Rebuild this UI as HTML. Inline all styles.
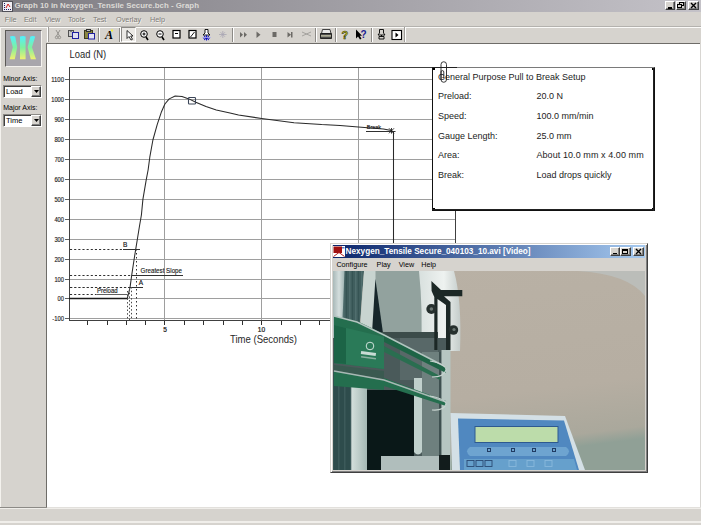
<!DOCTYPE html>
<html><head><meta charset="utf-8">
<style>
*{margin:0;padding:0;box-sizing:border-box}
html,body{width:703px;height:525px;overflow:hidden;background:#fff;font-family:"Liberation Sans",sans-serif;position:relative}
.a{position:absolute}
.t{position:absolute;white-space:nowrap;line-height:1}
#title{left:0;top:0;width:701px;height:12px;background:linear-gradient(to right,#7e7c82,#c4c2c8)}
#menu{left:0;top:12px;width:701px;height:14px;background:#d6d3ce}
.mi{position:absolute;top:16px;font-size:7.3px;color:#7c7a76;text-shadow:0.6px 0.6px 0 #f6f5f2;white-space:nowrap;line-height:1}
#tb{left:46px;top:27px;width:655px;height:16px;background:#d6d3ce;border-top:1px solid #fbfaf8}
#left{left:0;top:27px;width:47px;height:481px;background:#d6d3ce;border-top:1px solid #fbfaf8;border-left:1px solid #f4f2ee}
#chart{left:46px;top:43px;width:654px;height:464px;background:#fff;border-left:1px solid #6e6c68;border-top:1px solid #6e6c68}
#status{left:0;top:507px;width:701px;height:18px;background:#d6d3ce;border-top:1px solid #e2e0dc}
.wb{position:absolute;background:#d6d3ce;border:1px solid;border-color:#fff #404040 #404040 #fff;box-shadow:inset -1px -1px 0 #808080}
.sep{position:absolute;top:28px;width:2px;height:14px;border-left:1px solid #8c8a86;border-right:1px solid #fff}
</style></head><body>
<div id="title" class="a"></div>
<svg class="a" style="left:2px;top:1px" width="11" height="11" viewBox="0 0 11 11"><rect x="0.5" y="0.5" width="10" height="10" fill="#f0eef4" stroke="#505058" stroke-width="1"/><g fill="#1a1a60"><rect x="2" y="2" width="1" height="1"/><rect x="2" y="4" width="1" height="1"/><rect x="2" y="6" width="1" height="1"/><rect x="2" y="8" width="1" height="1"/><rect x="4" y="8" width="1" height="1"/><rect x="6" y="8" width="1" height="1"/><rect x="8" y="8" width="1" height="1"/></g><polyline points="4,7 6,3 8,6" fill="none" stroke="#d02020" stroke-width="1"/></svg>
<div class="t" style="left:14.5px;top:2.2px;font-size:7.9px;font-weight:bold;color:#dcdad6">Graph 10 in Nexygen_Tensile Secure.bch - Graph</div>
<div class="wb" style="left:665px;top:1px;width:10px;height:9px"></div>
<div class="a" style="left:668px;top:7px;width:4px;height:1.5px;background:#000"></div>
<div class="wb" style="left:676px;top:1px;width:10px;height:9px"></div>
<svg class="a" style="left:677px;top:2px" width="8" height="7"><rect x="2.5" y="0.5" width="4" height="3" fill="none" stroke="#000" stroke-width="1"/><rect x="0.5" y="2.5" width="4" height="3" fill="#d6d3ce" stroke="#000" stroke-width="1"/></svg>
<div class="wb" style="left:688px;top:1px;width:11px;height:9px"></div>
<svg class="a" style="left:690px;top:2px" width="7" height="7"><path d="M1 1L6 6M6 1L1 6" stroke="#000" stroke-width="1.4"/></svg>
<div id="menu" class="a"></div>
<div class="mi" style="left:4.8px">File</div>
<div class="mi" style="left:23.9px">Edit</div>
<div class="mi" style="left:44.7px">View</div>
<div class="mi" style="left:67.9px">Tools</div>
<div class="mi" style="left:93px">Test</div>
<div class="mi" style="left:116px">Overlay</div>
<div class="mi" style="left:150px">Help</div>
<div class="a" style="left:0;top:26px;width:701px;height:1px;background:#b4b2ae"></div>
<div id="tb" class="a"></div>
<div id="left" class="a"></div>
<div id="chart" class="a"></div>
<div class="a" style="left:700px;top:43px;width:1px;height:482px;background:#d8d6d2"></div>
<div id="status" class="a"></div>
<div class="a" style="left:0;top:508px;width:701px;height:1px;background:#efede9"></div><div class="a" style="left:0;top:521px;width:701px;height:2px;background:#f0eeea"></div>
<!-- toolbar -->
<div class="a" style="left:47px;top:27px;width:1px;height:15px;background:#fff"></div>
<div class="a" style="left:48px;top:27px;width:1px;height:15px;background:#a09e9a"></div>
<div class="sep" style="left:98px"></div>
<div class="sep" style="left:119px"></div>
<div class="sep" style="left:232px"></div>
<div class="sep" style="left:315px"></div>
<div class="sep" style="left:335px"></div>
<div class="sep" style="left:371px"></div>
<div class="a" style="left:405px;top:27px;width:1px;height:15px;background:#fff"></div>
<div class="a" style="left:404px;top:27px;width:1px;height:15px;background:#a09e9a"></div>
<div class="a" style="left:121px;top:27px;width:15px;height:15px;background:#ebe9e5;border-top:1px solid #8c8a86;border-left:1px solid #8c8a86;border-right:1px solid #fff;border-bottom:1px solid #fff"></div>
<svg class="a" style="left:0;top:0" width="703" height="44" viewBox="0 0 703 44">
 <!-- scissors grey -->
 <g fill="none" stroke="#8e8c88" stroke-width="0.9">
  <path d="M56 30L59.6 36.2M60 30L56.4 36.2"/>
  <circle cx="56.6" cy="37.4" r="1.3"/><circle cx="59.4" cy="37.4" r="1.3"/>
 </g>
 <!-- copy -->
 <rect x="68.5" y="30.5" width="5" height="6" fill="#c8c8c8" stroke="#505050"/>
 <rect x="72.5" y="32.5" width="6" height="6" fill="#e0e0f0" stroke="#2020a0"/>
 <rect x="70" y="31" width="2" height="1" fill="#808080"/>
 <!-- paste -->
 <rect x="84.5" y="30.5" width="8" height="8" fill="#8a8640" stroke="#3c3a20"/>
 <rect x="86.5" y="29.5" width="4" height="2" fill="#c0c0c0" stroke="#303030"/>
 <rect x="88.5" y="33.5" width="6" height="5.5" fill="#e4e4f4" stroke="#2020a0"/>
 <!-- A -->
 <text x="105" y="39" font-family="Liberation Serif" font-style="italic" font-weight="bold" font-size="12" fill="#000">A</text>
 <rect x="111" y="29.5" width="2" height="2" fill="#f0f040"/>
 <!-- arrow -->
 <path d="M127 30.5L127 38.5L129 36.5L131 40L132.5 39.3L130.7 36L133 36Z" fill="#fff" stroke="#000" stroke-width="0.8"/>
 <!-- zoom + -->
 <circle cx="144" cy="34" r="3.3" fill="#fff" stroke="#000" stroke-width="1"/>
 <path d="M142.5 34H145.5M144 32.5V35.5" stroke="#000" stroke-width="1"/>
 <path d="M146 37L148 40" stroke="#000" stroke-width="1.6"/>
 <!-- zoom - -->
 <circle cx="160" cy="34" r="3.3" fill="#fff" stroke="#000" stroke-width="1"/>
 <path d="M158.5 34H161.5" stroke="#000" stroke-width="1"/>
 <path d="M162 37L164 40" stroke="#000" stroke-width="1.6"/>
 <!-- box1 -->
 <rect x="173" y="30.5" width="7" height="7.5" fill="#fff" stroke="#000" stroke-width="1.2"/>
 <rect x="175" y="33" width="3" height="1" fill="#000"/>
 <!-- box2 -->
 <rect x="189" y="30.5" width="7" height="7.5" fill="#fff" stroke="#000" stroke-width="1.2"/>
 <path d="M190.5 37L194.5 32" stroke="#000" stroke-width="0.9"/>
 <!-- pin blue -->
 <path d="M205 29.5H208V33L210 35H203L205 33Z" fill="#fff" stroke="#000" stroke-width="0.9"/>
 <path d="M203 38L210 38M206.5 35V40.5M204 36L209 40M209 36L204 40" stroke="#1010c0" stroke-width="1"/>
 <path d="M202 37.5H211" stroke="#b0b0f0" stroke-width="0.8"/>
 <!-- star grey -->
 <path d="M222.8 31V38M219 34.5H226.6M220.5 32.2L225 36.8M225 32.2L220.5 36.8" stroke="#a8a6b4" stroke-width="0.8"/>
 <!-- ff -->
 <path d="M240 32V37.5L243 34.75ZM244 32V37.5L247 34.75Z" fill="#6c6a66"/>
 <path d="M256.5 31.5V38L260.5 34.75Z" fill="#6c6a66"/>
 <rect x="272.5" y="32" width="4" height="5" fill="#6c6a66"/>
 <path d="M287.5 32V37.5L291 34.75ZM291 32H292.5V37.5H291Z" fill="#6c6a66"/>
 <!-- scissors grey horizontal -->
 <g fill="none" stroke="#a4a29e" stroke-width="1">
  <path d="M302 32L311 36M302 36L311 32"/>
 </g>
 <!-- printer -->
 <path d="M322.5 29.5H330L331 33.5H321.5Z" fill="#e8e8e8" stroke="#303030" stroke-width="0.9"/>
 <path d="M320.5 33.5H331.5V38.5H320.5Z" fill="#4a4a4a" stroke="#1a1a1a" stroke-width="0.9"/>
 <rect x="321" y="35.3" width="10" height="1.2" fill="#d8d8b8"/>
 <!-- ? yellow -->
 <text x="341.5" y="38.5" font-family="Liberation Sans" font-weight="bold" font-size="11" fill="#c8c820" stroke="#202000" stroke-width="0.5">?</text>
 <!-- arrow ? -->
 <path d="M356 29.5L356 38.5L358 36.5L360 39.5L361.5 38.8L359.7 35.8L362 35.8Z" fill="#000"/>
 <text x="360.5" y="37.5" font-family="Liberation Sans" font-weight="bold" font-size="10" fill="#1a1a90">?</text>
 <!-- pin outline -->
 <path d="M379.5 29.5H383.5V33L385 35H378L379.5 33ZM381.5 35V36.5M379 36.5H384V39H379Z" fill="none" stroke="#000" stroke-width="0.9"/>
 <!-- play box -->
 <rect x="392" y="30.5" width="9.5" height="9" fill="#fff" stroke="#000" stroke-width="1.1"/>
 <path d="M395.5 32.5V37.5L398.5 35Z" fill="#000"/>
</svg>

<!-- left panel -->
<div class="a" style="left:0;top:507px;width:47px;height:1px;background:#8c8a86"></div>
<div class="a" style="left:5px;top:30px;width:37px;height:37px;background:#a8a6ac;border-top:1px solid #5a5856;border-left:1px solid #5a5856;border-right:1px solid #f4f2ee;border-bottom:1px solid #f4f2ee"></div>
<svg class="a" style="left:5px;top:30px" width="37" height="37" viewBox="0 0 37 37">
 <defs><linearGradient id="lg" x1="0" y1="0" x2="0" y2="1"><stop offset="0" stop-color="#50f0ff"/><stop offset="0.5" stop-color="#80f0a0"/><stop offset="1" stop-color="#f0f070"/></linearGradient></defs>
 <path d="M5 6.5Q7.6 5.5 10.2 6.5L12.2 17.2L9.8 29.2H4.6L7.8 17.2Z" fill="url(#lg)"/>
 <path d="M15 6.5Q17.8 5.5 20.6 6.5V29.2H15Z" fill="url(#lg)"/>
 <path d="M25.4 6.5Q27.8 5.5 30.2 6.5L27 17.2L31 29.2H25.8L22.6 17.2Z" fill="url(#lg)"/>
</svg>
<div class="t" style="left:3.2px;top:75px;font-size:7px;color:#000">Minor Axis:</div>
<div class="a" style="left:3px;top:85px;width:39px;height:13px;background:#fff;border-top:1px solid #8c8a86;border-left:1px solid #8c8a86;border-right:1px solid #fff;border-bottom:1px solid #fff;box-shadow:inset 1px 1px 0 #404040"></div>
<div class="t" style="left:6px;top:88.2px;font-size:7.5px;color:#000">Load</div>
<div class="wb" style="left:31px;top:86px;width:10px;height:11px"></div>
<svg class="a" style="left:34px;top:90px" width="5" height="3"><path d="M0 0H5L2.5 3Z" fill="#000"/></svg>
<div class="t" style="left:3.2px;top:103.5px;font-size:7px;color:#000">Major Axis:</div>
<div class="a" style="left:3px;top:114px;width:39px;height:13px;background:#fff;border-top:1px solid #8c8a86;border-left:1px solid #8c8a86;border-right:1px solid #fff;border-bottom:1px solid #fff;box-shadow:inset 1px 1px 0 #404040"></div>
<div class="t" style="left:6px;top:116.8px;font-size:7.5px;color:#000">Time</div>
<div class="wb" style="left:31px;top:115px;width:10px;height:11px"></div>
<svg class="a" style="left:34px;top:119px" width="5" height="3"><path d="M0 0H5L2.5 3Z" fill="#000"/></svg>
<svg class="a" style="left:0;top:0" width="703" height="525" viewBox="0 0 703 525">
<path d="M69 318.5H455" stroke="#9e9e9e" stroke-width="1"/>
<path d="M65 318.5H69" stroke="#606060" stroke-width="1"/>
<path d="M69 298.5H455" stroke="#9e9e9e" stroke-width="1"/>
<path d="M65 298.5H69" stroke="#606060" stroke-width="1"/>
<path d="M69 279.5H455" stroke="#9e9e9e" stroke-width="1"/>
<path d="M65 279.5H69" stroke="#606060" stroke-width="1"/>
<path d="M69 259.5H455" stroke="#9e9e9e" stroke-width="1"/>
<path d="M65 259.5H69" stroke="#606060" stroke-width="1"/>
<path d="M69 239.5H455" stroke="#9e9e9e" stroke-width="1"/>
<path d="M65 239.5H69" stroke="#606060" stroke-width="1"/>
<path d="M69 219.5H455" stroke="#9e9e9e" stroke-width="1"/>
<path d="M65 219.5H69" stroke="#606060" stroke-width="1"/>
<path d="M69 199.5H455" stroke="#9e9e9e" stroke-width="1"/>
<path d="M65 199.5H69" stroke="#606060" stroke-width="1"/>
<path d="M69 179.5H455" stroke="#9e9e9e" stroke-width="1"/>
<path d="M65 179.5H69" stroke="#606060" stroke-width="1"/>
<path d="M69 159.5H455" stroke="#9e9e9e" stroke-width="1"/>
<path d="M65 159.5H69" stroke="#606060" stroke-width="1"/>
<path d="M69 139.5H455" stroke="#9e9e9e" stroke-width="1"/>
<path d="M65 139.5H69" stroke="#606060" stroke-width="1"/>
<path d="M69 119.5H455" stroke="#9e9e9e" stroke-width="1"/>
<path d="M65 119.5H69" stroke="#606060" stroke-width="1"/>
<path d="M69 99.5H455" stroke="#9e9e9e" stroke-width="1"/>
<path d="M65 99.5H69" stroke="#606060" stroke-width="1"/>
<path d="M69 79.5H455" stroke="#9e9e9e" stroke-width="1"/>
<path d="M65 79.5H69" stroke="#606060" stroke-width="1"/>
<path d="M164.5 67V320" stroke="#9e9e9e" stroke-width="1"/>
<path d="M261.5 67V320" stroke="#9e9e9e" stroke-width="1"/>
<path d="M358.5 67V320" stroke="#9e9e9e" stroke-width="1"/>
<path d="M69.5 67V321M69 320.5H456M69 67.5H455M455.5 67V321" stroke="#404040" stroke-width="1" fill="none"/>
<path d="M87.5 321V325" stroke="#303030" stroke-width="1"/>
<path d="M107.5 321V325" stroke="#303030" stroke-width="1"/>
<path d="M126.5 321V325" stroke="#303030" stroke-width="1"/>
<path d="M145.5 321V325" stroke="#303030" stroke-width="1"/>
<path d="M164.5 321V325" stroke="#303030" stroke-width="1"/>
<path d="M184.5 321V325" stroke="#303030" stroke-width="1"/>
<path d="M203.5 321V325" stroke="#303030" stroke-width="1"/>
<path d="M223.5 321V325" stroke="#303030" stroke-width="1"/>
<path d="M242.5 321V325" stroke="#303030" stroke-width="1"/>
<path d="M261.5 321V325" stroke="#303030" stroke-width="1"/>
<path d="M281.5 321V325" stroke="#303030" stroke-width="1"/>
<path d="M300.5 321V325" stroke="#303030" stroke-width="1"/>
<path d="M319.5 321V325" stroke="#303030" stroke-width="1"/>
<path d="M339.5 321V325" stroke="#303030" stroke-width="1"/>
<path d="M358.5 321V325" stroke="#303030" stroke-width="1"/>
<path d="M378.5 321V325" stroke="#303030" stroke-width="1"/>
<path d="M397.5 321V325" stroke="#303030" stroke-width="1"/>
<path d="M416.5 321V325" stroke="#303030" stroke-width="1"/>
<path d="M436.5 321V325" stroke="#303030" stroke-width="1"/>
<text x="52.2" y="321.0" font-size="7" textLength="11.8" lengthAdjust="spacingAndGlyphs" fill="#202020" stroke="#202020" stroke-width="0.15">-100</text>
<text x="57.6" y="301.0" font-size="7" textLength="6.4" lengthAdjust="spacingAndGlyphs" fill="#202020" stroke="#202020" stroke-width="0.15">00</text>
<text x="54.4" y="282.0" font-size="7" textLength="9.6" lengthAdjust="spacingAndGlyphs" fill="#202020" stroke="#202020" stroke-width="0.15">100</text>
<text x="54.4" y="262.0" font-size="7" textLength="9.6" lengthAdjust="spacingAndGlyphs" fill="#202020" stroke="#202020" stroke-width="0.15">200</text>
<text x="54.4" y="242.0" font-size="7" textLength="9.6" lengthAdjust="spacingAndGlyphs" fill="#202020" stroke="#202020" stroke-width="0.15">300</text>
<text x="54.4" y="222.0" font-size="7" textLength="9.6" lengthAdjust="spacingAndGlyphs" fill="#202020" stroke="#202020" stroke-width="0.15">400</text>
<text x="54.4" y="202.0" font-size="7" textLength="9.6" lengthAdjust="spacingAndGlyphs" fill="#202020" stroke="#202020" stroke-width="0.15">500</text>
<text x="54.4" y="182.0" font-size="7" textLength="9.6" lengthAdjust="spacingAndGlyphs" fill="#202020" stroke="#202020" stroke-width="0.15">600</text>
<text x="54.4" y="162.0" font-size="7" textLength="9.6" lengthAdjust="spacingAndGlyphs" fill="#202020" stroke="#202020" stroke-width="0.15">700</text>
<text x="54.4" y="142.0" font-size="7" textLength="9.6" lengthAdjust="spacingAndGlyphs" fill="#202020" stroke="#202020" stroke-width="0.15">800</text>
<text x="54.4" y="122.0" font-size="7" textLength="9.6" lengthAdjust="spacingAndGlyphs" fill="#202020" stroke="#202020" stroke-width="0.15">900</text>
<text x="51.2" y="102.0" font-size="7" textLength="12.8" lengthAdjust="spacingAndGlyphs" fill="#202020" stroke="#202020" stroke-width="0.15">1000</text>
<text x="51.2" y="82.0" font-size="7" textLength="12.8" lengthAdjust="spacingAndGlyphs" fill="#202020" stroke="#202020" stroke-width="0.15">1100</text>
<text x="165" y="331.8" text-anchor="middle" font-size="6.6" fill="#202020" stroke="#202020" stroke-width="0.22">5</text>
<text x="261.5" y="331.8" text-anchor="middle" font-size="6.6" fill="#202020" stroke="#202020" stroke-width="0.22">10</text>
<text x="358" y="331.8" text-anchor="middle" font-size="6.6" fill="#202020" stroke="#202020" stroke-width="0.22">15</text>
<text x="69.6" y="58.1" font-size="10" textLength="36.6" lengthAdjust="spacingAndGlyphs" fill="#282828">Load (N)</text>
<text x="230" y="342.6" font-size="10.2" textLength="67" lengthAdjust="spacingAndGlyphs" fill="#282828">Time (Seconds)</text>
<path d="M69,298.5 L127.3,298.5 L130,287.6 L131.7,275.3 L134,260 L135.7,249.3 L137.4,239 L139.5,226 L141.4,215 L142.9,199.4 L146.3,179.4 L148.1,170 L149.8,157.2 L152.9,140 L157.2,124.6 L161.5,111.7 L164.9,104 L169.2,98.9 L175.2,96 L182,96.6 L188.9,98.9 L195.8,102.3 L206,106.6 L216.3,110 L230,112.9 L238.5,115 L261.6,118.5 L294,122.7 L321.7,124.6 L340,125.4 L358.3,127.1 L383.4,128.9 L391.4,130.6 L393.5,132.5 L393.5,300" fill="none" stroke="#2a2a2a" stroke-width="1.05" stroke-linejoin="round"/>
<path d="M69 298.5H127" stroke="#1a1a1a" stroke-width="1.6"/>
<g stroke="#303030" stroke-width="1" fill="none">
<path d="M70 249.5H123" stroke-dasharray="2.1 2.05"/><path d="M123 249.5H140"/>
<path d="M70 275.5H132" stroke-dasharray="2.1 2.05"/><path d="M132 275.5H183"/>
<path d="M70 287.5H128" stroke-dasharray="2.3 1.85"/><path d="M128 287.5H143"/>
<path d="M70 294.5H96.5" stroke-dasharray="2.1 2.05"/><path d="M96.5 294.5H127.5" stroke="#606060"/>
<path d="M136.5 249V320" stroke-dasharray="1.5 2.5"/>
<path d="M127.5 291V320M129.5 289V320M131.5 287V320" stroke-dasharray="1.5 2.2" stroke="#484848"/>
<path d="M366 131.5H395.5"/>
</g>
<text x="123" y="246.6" font-size="6.5" fill="#202020" stroke="#202020" stroke-width="0.2">B</text>
<text x="140.6" y="273.3" font-size="7.4" textLength="41.4" lengthAdjust="spacingAndGlyphs" fill="#202020" stroke="#202020" stroke-width="0.15">Greatest Slope</text>
<text x="138.8" y="284.9" font-size="6.5" fill="#202020" stroke="#202020" stroke-width="0.2">A</text>
<text x="96.9" y="292.9" font-size="7.3" textLength="20.8" lengthAdjust="spacingAndGlyphs" fill="#202020" stroke="#202020" stroke-width="0.15">Preload</text>
<text x="366.8" y="128.5" font-size="5.8" textLength="14.2" lengthAdjust="spacingAndGlyphs" fill="#202020" stroke="#202020" stroke-width="0.2">Break</text>
<path d="M389 128.3L394 133.3M394 128.3L389 133.3M391.5 128V133.6" stroke="#202020" stroke-width="0.9"/>
<rect x="188.5" y="97.5" width="7" height="6.5" rx="0.8" fill="none" stroke="#3c4658" stroke-width="1.1"/>
</svg>
<!-- note box -->
<div class="a" style="left:432px;top:67px;width:223px;height:144px;background:#fff;border:1px solid #111;border-top-color:#7a7a7a"></div>
<div class="a" style="left:432px;top:67px;width:25px;height:1px;background:#222"></div>
<div class="a" style="left:433px;top:68px;width:2px;height:2px;background:#000"></div>
<div class="a" style="left:433px;top:208px;width:2px;height:2px;background:#000"></div>
<div class="a" style="left:652px;top:208px;width:2px;height:2px;background:#000"></div>
<div class="a" style="left:652px;top:68px;width:2px;height:2px;background:#000"></div>
<div class="a" style="left:653px;top:68px;width:1px;height:143px;background:#222"></div>
<div class="a" style="left:432px;top:209px;width:222px;height:1px;background:#222"></div>
<div class="t" style="left:437.9px;top:73.00px;font-size:9px;color:#1c1c1c">General Purpose Pull to Break Setup</div>
<div class="t" style="left:437.9px;top:91.80px;font-size:9px;color:#1c1c1c">Preload:</div>
<div class="t" style="left:536.4px;top:91.80px;font-size:9px;color:#1c1c1c">20.0 N</div>
<div class="t" style="left:437.9px;top:111.80px;font-size:9px;color:#1c1c1c">Speed:</div>
<div class="t" style="left:536.4px;top:111.80px;font-size:9px;color:#1c1c1c">100.0 mm/min</div>
<div class="t" style="left:437.9px;top:131.60px;font-size:9px;color:#1c1c1c">Gauge Length:</div>
<div class="t" style="left:536.4px;top:131.60px;font-size:9px;color:#1c1c1c">25.0 mm</div>
<div class="t" style="left:437.9px;top:151.30px;font-size:9px;color:#1c1c1c">Area:</div>
<div class="t" style="left:536.4px;top:151.30px;font-size:9px;letter-spacing:0.08px;color:#1c1c1c">About 10.0 mm x 4.00 mm</div>
<div class="t" style="left:437.9px;top:171.00px;font-size:9px;color:#1c1c1c">Break:</div>
<div class="t" style="left:536.4px;top:171.00px;font-size:9px;color:#1c1c1c">Load drops quickly</div>
<svg class="a" style="left:438px;top:59px" width="12" height="26" viewBox="0 0 12 26">
 <path d="M3 20V5.5A2.75 2.75 0 0 1 8.5 5.5V20.5A2.75 2.75 0 0 1 3 20.5V13A1.4 1.4 0 0 1 5.8 13V19" fill="none" stroke="#222" stroke-width="0.9"/>
</svg>
<!-- video window -->
<div class="a" style="left:330px;top:243px;width:318px;height:230px;background:#d6d3ce;border:1px solid;border-color:#d6d3ce #404040 #404040 #d6d3ce;box-shadow:inset 1px 1px 0 #fff,inset -1px -1px 0 #808080"></div>
<div class="a" style="left:333px;top:245px;width:312px;height:13px;background:linear-gradient(to right,#0a246a,#a6caf0)"></div>
<svg class="a" style="left:333px;top:246px" width="12" height="11" viewBox="0 0 12 11"><rect width="12" height="11" fill="#fff"/><rect x="0.5" y="0.5" width="8.5" height="6.5" fill="#a01010"/><path d="M9 1H11.5V2.5H9Z" fill="#6080c0"/><path d="M0.5 10.5L6 6.5L11.5 10.5" fill="none" stroke="#b02020" stroke-width="1"/></svg>
<div class="t" style="left:345.6px;top:248.1px;font-size:8.2px;font-weight:bold;color:#fff">Nexygen_Tensile Secure_040103_10.avi [Video]</div>
<div class="wb" style="left:610px;top:247px;width:10px;height:9px"></div>
<div class="a" style="left:613px;top:253px;width:4px;height:1px;background:#000"></div>
<div class="wb" style="left:620px;top:247px;width:11px;height:9px"></div>
<div class="a" style="left:622px;top:249px;width:6px;height:5px;border:1px solid #000;border-top-width:2px"></div>
<div class="wb" style="left:633px;top:247px;width:11px;height:9px"></div>
<svg class="a" style="left:635px;top:248px" width="7" height="7"><path d="M1 1L6 6M6 1L1 6" stroke="#000" stroke-width="1.4"/></svg>
<div class="t" style="left:336.4px;top:261.3px;font-size:7.2px;color:#000">Configure</div>
<div class="t" style="left:376.6px;top:261.3px;font-size:7.2px;color:#000">Play</div>
<div class="t" style="left:398.7px;top:261.3px;font-size:7.2px;color:#000">View</div>
<div class="t" style="left:421.2px;top:261.3px;font-size:7.2px;color:#000">Help</div>
<svg class="a" style="left:333px;top:271px" width="312" height="199" viewBox="333 271 312 199">
 <defs>
  <linearGradient id="wallg" x1="0" y1="0" x2="0.2" y2="1"><stop offset="0" stop-color="#b9b1a5"/><stop offset="0.7" stop-color="#b6aea2"/><stop offset="0.94" stop-color="#aaa89c"/><stop offset="1" stop-color="#90a096"/></linearGradient>
  <linearGradient id="leftg" x1="0" y1="0" x2="1" y2="0"><stop offset="0" stop-color="#a8b8b8"/><stop offset="0.5" stop-color="#d4dedd"/><stop offset="1" stop-color="#9ab0ae"/></linearGradient>
  <linearGradient id="cylg" x1="0" y1="0" x2="1" y2="0"><stop offset="0" stop-color="#d8e0de"/><stop offset="0.6" stop-color="#eef2f0"/><stop offset="1" stop-color="#c4ccca"/></linearGradient>
  <linearGradient id="stripg" x1="0" y1="0" x2="1" y2="0"><stop offset="0" stop-color="#d4e0dc"/><stop offset="1" stop-color="#a4b8b4"/></linearGradient>
  <pattern id="stripes" width="6" height="6" patternUnits="userSpaceOnUse"><rect width="6" height="6" fill="#405e5e"/><rect x="1" y="0" width="1.5" height="6" fill="#506e6e"/><rect x="4" y="0" width="1" height="6" fill="#365454"/></pattern>
  <pattern id="stripes2" width="6" height="6" patternUnits="userSpaceOnUse"><rect width="6" height="6" fill="#2e4c4c"/><rect x="2" y="0" width="1.5" height="6" fill="#3c5a5a"/></pattern>
 </defs>
 <rect x="333" y="271" width="312" height="199" fill="url(#wallg)"/>
 <path d="M578 271Q628 274 645 296V271Z" fill="#bbbdb9"/>
 <!-- left light strip -->
 <rect x="333" y="271" width="12" height="120" fill="url(#leftg)"/>
 <!-- dark striped column (upper, slanted) -->
 <path d="M344.5 271H364L359.5 330L342 332Z" fill="url(#stripes)"/>
 <!-- light region right of column -->
 <path d="M364 271H376V335H359.5Z" fill="#c8d4d0"/>
 <!-- load cell block -->
 <path d="M375.5 271H423Q421 300 423 333H375.5Z" fill="#92a29e"/>
 <!-- dark wedge -->
 <path d="M375.4 279L383 333H372Z" fill="#16262a"/>
 <!-- white cylinder -->
 <path d="M419 271H454Q462 300 460 351H421Q423 310 419 271Z" fill="url(#cylg)"/>
 <!-- dark band under load cell -->
 <rect x="360" y="332" width="78" height="6" fill="#3c4c4a"/>
 <!-- mid dark area -->
 <path d="M360 338H450V470H333V338Z" fill="#4a5a5a"/>
 <path d="M400 338H438V380H400Z" fill="#586868"/>
 <!-- lower left striped column -->
 <rect x="333" y="372" width="18.5" height="98" fill="url(#stripes2)"/>
 <!-- light strip -->
 <rect x="351.3" y="385" width="15.7" height="85" fill="url(#stripg)"/>
 <!-- black area -->
 <rect x="367" y="390" width="47" height="80" fill="#0a1818"/>
 <!-- light pillar -->
 <path d="M414 378H422V452Q418 457 414 452Z" fill="#c0d0cc"/>
 <!-- grey column -->
 <rect x="422" y="352" width="19.5" height="118" fill="#6e807e"/>
 <rect x="439" y="352" width="2.5" height="103" fill="#3e5050"/>
 <!-- light strip near wall -->
 <rect x="441.5" y="350" width="9" height="120" fill="#b6c6c2"/>
 <!-- base -->
 <rect x="381" y="456" width="58" height="14" fill="#b0bebc"/>
 <rect x="439" y="455" width="11" height="15" fill="#121c1c"/>
 <!-- bracket -->
 <path d="M431.4 281L441 290H462.3V296.3H444L450.5 302V350H446V305L437.5 299V350H434.3V297L431.6 291Z" fill="#1c2826"/>
 <circle cx="431.4" cy="309" r="5.1" fill="#26302e"/>
 <circle cx="431.4" cy="309" r="1.8" fill="#6c7874"/>
 <circle cx="453.4" cy="330" r="4.8" fill="#26302e"/>
 <circle cx="454" cy="329.5" r="1.6" fill="#6c7874"/>
 <rect x="434" y="320" width="16" height="31" fill="none"/>
 <!-- green grip upper -->
 <path d="M334 316L357 321L384 334L446 367V372L384 341V369L334 363Z" fill="#246e4e"/>
 <path d="M334 325L384 337V369L334 363Z" fill="#2a7a58"/>
 <path d="M334 325L346 328V364L334 363Z" fill="#1c6446"/>
 <path d="M384 336L446 368V373L384 342Z" fill="#1e6446"/>
 <path d="M384 346L440 376V380L384 352Z" fill="#2a6e50"/>
 <path d="M334 316L357 322L384 335L446 367" fill="none" stroke="#b4c4c0" stroke-width="1.5"/>
 <circle cx="370" cy="346" r="3.8" fill="none" stroke="#e0ece8" stroke-width="0.9"/>
 <rect x="361" y="352" width="15" height="3" fill="#c8dcd4" transform="rotate(8 368 353)"/>
 <rect x="361" y="357" width="15" height="1.5" fill="#8ab0a0" transform="rotate(8 368 358)"/>
 <!-- green grip lower -->
 <path d="M334 369L384 378L446 401V406L384 386V390L334 386Z" fill="#246e4e"/>
 <path d="M334 365L384 371V380L334 371Z" fill="#3a5a50"/>
 <path d="M334 371L384 380L446 402" fill="none" stroke="#a8b8b4" stroke-width="1.4"/>
 <!-- hooks -->
 <path d="M430 361Q446 364 446 370Q444 377 432 377" fill="none" stroke="#c8d4d0" stroke-width="1.1"/>
 <path d="M430 396Q446 399 446 404Q444 411 432 410" fill="none" stroke="#c8d4d0" stroke-width="1.1"/>
 <!-- controller -->
 <path d="M450.5 413L565 416L585 470H452Z" fill="#d4e0e6"/>
 <path d="M458 418.5L564 420.5L579 470H460Z" fill="#5088c0"/>
 <rect x="474.5" y="426" width="84" height="17" fill="#2e5a90"/>
 <rect x="475.5" y="427" width="82" height="15" fill="#bcdcaa"/>
 <path d="M470 447H566Q572 451 566 456H470Q464 451 470 447Z" fill="#6ea4d0"/>
 <g fill="none" stroke="#203c64" stroke-width="1"><rect x="487.5" y="448.5" width="3" height="3"/><rect x="511.5" y="448.5" width="3" height="3"/><rect x="532.5" y="448.5" width="3" height="3"/><rect x="552.5" y="448.5" width="3" height="3"/></g>
 <path d="M464 459H574L577 470H464Z" fill="#66a0cc"/>
 <g fill="none" stroke="#2a4a74" stroke-width="0.9"><rect x="467" y="460.5" width="7" height="6"/><rect x="476" y="460.5" width="7" height="6"/><rect x="485" y="460.5" width="7" height="6"/></g>
 <g fill="none" stroke="#88b8dc" stroke-width="0.9"><rect x="509" y="460.5" width="7" height="6"/><rect x="527" y="460.5" width="7" height="6"/><rect x="545" y="460.5" width="7" height="6"/></g>
</svg>
</body></html>
